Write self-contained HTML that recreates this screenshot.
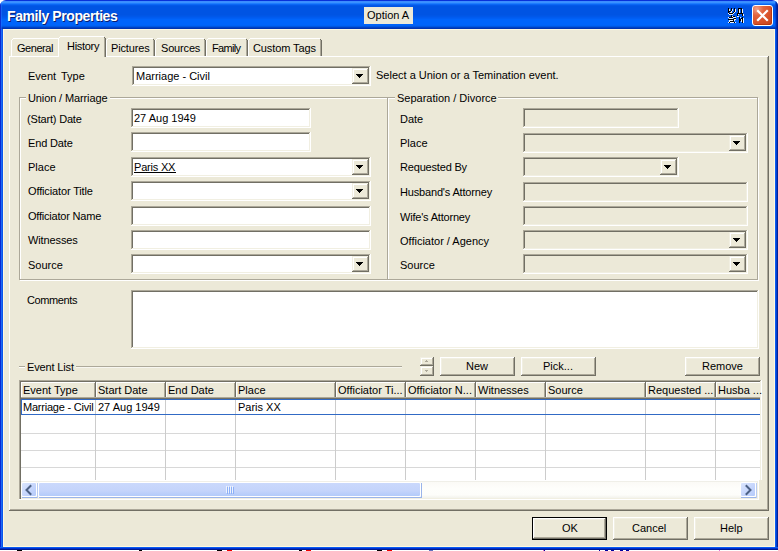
<!DOCTYPE html>
<html><head><meta charset="utf-8">
<style>
*{box-sizing:border-box}
html,body{margin:0;padding:0}
body{width:778px;height:551px;overflow:hidden;position:relative;background:#fff;font-family:"Liberation Sans",sans-serif;font-size:11px;color:#000}
.a{position:absolute}
.t{position:absolute;white-space:nowrap;line-height:20px;font-size:11px}
</style></head><body>

<div class="a" style="left:0px;top:29px;width:778px;height:521px;background:#0a50e8;"></div>
<div class="a" style="left:0px;top:29px;width:1px;height:521px;background:#0a28d0;"></div>
<div class="a" style="left:1px;top:29px;width:1px;height:518px;background:#1d6af5;"></div>
<div class="a" style="left:2px;top:29px;width:1px;height:518px;background:#0a56ec;"></div>
<div class="a" style="left:775px;top:29px;width:1px;height:518px;background:#0a5cf0;"></div>
<div class="a" style="left:776px;top:29px;width:1px;height:521px;background:#0040d0;"></div>
<div class="a" style="left:777px;top:29px;width:1px;height:521px;background:#00209a;"></div>
<div class="a" style="left:0px;top:547px;width:778px;height:1px;background:#0a5cf0;"></div>
<div class="a" style="left:0px;top:548px;width:778px;height:1px;background:#0030d0;"></div>
<div class="a" style="left:0px;top:549px;width:778px;height:1px;background:#001a90;"></div>
<div class="a" style="left:0;top:0;width:778px;height:29px;border-radius:6px 6px 0 0;overflow:hidden;background:linear-gradient(180deg,#0831d9 0px,#0831d9 1px,#3c8cfe 1px,#3c8cfe 2px,#3a91ff 2px,#3a91ff 3px,#1f7cfe 3px,#1f7cfe 4px,#0a66f4 4px,#0a66f4 5px,#0358e8 5px,#0358e8 6px,#0054e3 6px,#0054e3 7px,#0054e3 7px,#0054e3 8px,#0054e3 8px,#0054e3 9px,#0054e3 9px,#0054e3 10px,#0054e3 10px,#0054e3 11px,#0054e3 11px,#0054e3 12px,#0054e3 12px,#0054e3 13px,#0054e3 13px,#0054e3 14px,#0054e3 14px,#0054e3 15px,#0056e6 15px,#0056e6 16px,#0058ea 16px,#0058ea 17px,#005bf0 17px,#005bf0 18px,#005ff4 18px,#005ff4 19px,#0064fb 19px,#0064fb 20px,#0064fb 20px,#0064fb 21px,#0064fb 21px,#0064fb 22px,#0064fb 22px,#0064fb 23px,#0064fb 23px,#0064fb 24px,#0064fb 24px,#0064fb 25px,#0062f4 25px,#0062f4 26px,#0056e2 26px,#0056e2 27px,#0042c4 27px,#0042c4 28px,#0034b0 28px,#0034b0 29px)"><div class="a" style="left:0;top:0;width:1px;height:29px;background:#0a30d0"></div><div class="a" style="left:1px;top:0;width:1px;height:29px;background:rgba(40,110,255,.5)"></div><div class="a" style="left:775px;top:0;width:1px;height:29px;background:rgba(0,56,200,.6)"></div><div class="a" style="left:776px;top:0;width:1px;height:29px;background:#002cb0"></div><div class="a" style="left:777px;top:0;width:1px;height:29px;background:#001c90"></div></div>
<div class="a" style="left:3px;top:29px;width:772px;height:518px;background:#fff8e0;"></div>
<div class="a" style="left:4px;top:30px;width:770px;height:516px;background:#ece9d8;"></div>
<div class="t" style="left:8px;top:7px;font-size:14px;font-weight:bold;letter-spacing:-0.42px;color:#0a1e6e">Family Properties</div>
<div class="t" style="left:7px;top:6px;font-size:14px;font-weight:bold;letter-spacing:-0.42px;color:#fff">Family Properties</div>
<div class="a" style="left:364px;top:7px;width:49px;height:17px;background:#ece9d8;"></div>
<div class="t" style="left:367px;top:5px;color:#000">Option A</div>
<div class="a" style="left:752px;top:5px;width:21px;height:21px;border:1px solid #fff;border-radius:3px;background:radial-gradient(circle at 20% 15%,#f0a088 0,#e2643e 30%,#d9522a 60%,#c4441c 100%);box-shadow:inset -1px -1px 0 #b83810"></div>
<svg class="a" style="left:752px;top:5px" width="21" height="21"><path d="M6 6 L15 15 M15 6 L6 15" stroke="#fff" stroke-width="2.2" stroke-linecap="square"/></svg>
<svg class="a" style="left:726px;top:7px" width="20" height="17" shape-rendering="crispEdges"><rect x="3" y="2" width="1" height="1" fill="#eaf2ff"/><rect x="3" y="3" width="1" height="1" fill="#eaf2ff"/><rect x="6" y="2" width="1" height="1" fill="#eaf2ff"/><rect x="6" y="3" width="1" height="1" fill="#eaf2ff"/><rect x="9" y="2" width="1" height="1" fill="#eaf2ff"/><rect x="9" y="3" width="1" height="1" fill="#eaf2ff"/><rect x="9" y="4" width="1" height="1" fill="#eaf2ff"/><rect x="5" y="4" width="1" height="1" fill="#eaf2ff"/><rect x="4" y="5" width="1" height="1" fill="#eaf2ff"/><rect x="5" y="5" width="1" height="1" fill="#eaf2ff"/><rect x="2" y="6" width="1" height="1" fill="#eaf2ff"/><rect x="7" y="6" width="1" height="1" fill="#eaf2ff"/><rect x="8" y="5" width="1" height="1" fill="#eaf2ff"/><rect x="3" y="7" width="1" height="1" fill="#eaf2ff"/><rect x="4" y="7" width="1" height="1" fill="#eaf2ff"/><rect x="5" y="7" width="1" height="1" fill="#eaf2ff"/><rect x="6" y="7" width="1" height="1" fill="#eaf2ff"/><rect x="13" y="2" width="1" height="1" fill="#eaf2ff"/><rect x="13" y="3" width="1" height="1" fill="#eaf2ff"/><rect x="13" y="4" width="1" height="1" fill="#eaf2ff"/><rect x="13" y="5" width="1" height="1" fill="#eaf2ff"/><rect x="16" y="2" width="1" height="1" fill="#eaf2ff"/><rect x="16" y="3" width="1" height="1" fill="#eaf2ff"/><rect x="16" y="4" width="1" height="1" fill="#eaf2ff"/><rect x="16" y="5" width="1" height="1" fill="#eaf2ff"/><rect x="12" y="7" width="1" height="1" fill="#eaf2ff"/><rect x="17" y="7" width="1" height="1" fill="#eaf2ff"/><rect x="17" y="8" width="1" height="1" fill="#eaf2ff"/><rect x="12" y="9" width="1" height="1" fill="#eaf2ff"/><rect x="11" y="9" width="1" height="1" fill="#eaf2ff"/><rect x="6" y="9" width="1" height="1" fill="#eaf2ff"/><rect x="2" y="10" width="1" height="1" fill="#eaf2ff"/><rect x="7" y="10" width="1" height="1" fill="#eaf2ff"/><rect x="8" y="10" width="1" height="1" fill="#eaf2ff"/><rect x="9" y="10" width="1" height="1" fill="#eaf2ff"/><rect x="3" y="11" width="1" height="1" fill="#eaf2ff"/><rect x="4" y="11" width="1" height="1" fill="#eaf2ff"/><rect x="5" y="11" width="1" height="1" fill="#eaf2ff"/><rect x="6" y="11" width="1" height="1" fill="#eaf2ff"/><rect x="8" y="12" width="1" height="1" fill="#eaf2ff"/><rect x="9" y="12" width="1" height="1" fill="#eaf2ff"/><rect x="3" y="13" width="1" height="1" fill="#eaf2ff"/><rect x="4" y="13" width="1" height="1" fill="#eaf2ff"/><rect x="5" y="13" width="1" height="1" fill="#eaf2ff"/><rect x="6" y="13" width="1" height="1" fill="#eaf2ff"/><rect x="8" y="13" width="1" height="1" fill="#eaf2ff"/><rect x="3" y="14" width="1" height="1" fill="#eaf2ff"/><rect x="4" y="15" width="1" height="1" fill="#eaf2ff"/><rect x="5" y="15" width="1" height="1" fill="#eaf2ff"/><rect x="6" y="15" width="1" height="1" fill="#eaf2ff"/><rect x="7" y="15" width="1" height="1" fill="#eaf2ff"/><rect x="2" y="15" width="1" height="1" fill="#eaf2ff"/><rect x="9" y="15" width="1" height="1" fill="#eaf2ff"/><rect x="17" y="11" width="1" height="1" fill="#eaf2ff"/><rect x="17" y="12" width="1" height="1" fill="#eaf2ff"/><rect x="17" y="13" width="1" height="1" fill="#eaf2ff"/><rect x="17" y="14" width="1" height="1" fill="#eaf2ff"/><rect x="17" y="15" width="1" height="1" fill="#eaf2ff"/><rect x="14" y="10" width="1" height="1" fill="#eaf2ff"/><rect x="15" y="12" width="1" height="1" fill="#eaf2ff"/><rect x="15" y="13" width="1" height="1" fill="#eaf2ff"/><rect x="15" y="14" width="1" height="1" fill="#eaf2ff"/><rect x="2" y="1" width="1" height="1" fill="#000"/><rect x="2" y="2" width="1" height="1" fill="#000"/><rect x="2" y="3" width="1" height="1" fill="#000"/><rect x="2" y="4" width="1" height="1" fill="#000"/><rect x="2" y="5" width="1" height="1" fill="#000"/><rect x="5" y="1" width="1" height="1" fill="#000"/><rect x="5" y="2" width="1" height="1" fill="#000"/><rect x="5" y="3" width="1" height="1" fill="#000"/><rect x="3" y="4" width="1" height="1" fill="#000"/><rect x="4" y="4" width="1" height="1" fill="#000"/><rect x="8" y="1" width="1" height="1" fill="#000"/><rect x="8" y="2" width="1" height="1" fill="#000"/><rect x="8" y="3" width="1" height="1" fill="#000"/><rect x="8" y="4" width="1" height="1" fill="#000"/><rect x="7" y="5" width="1" height="1" fill="#000"/><rect x="3" y="6" width="1" height="1" fill="#000"/><rect x="4" y="6" width="1" height="1" fill="#000"/><rect x="5" y="6" width="1" height="1" fill="#000"/><rect x="6" y="6" width="1" height="1" fill="#000"/><rect x="12" y="1" width="1" height="1" fill="#000"/><rect x="13" y="1" width="1" height="1" fill="#000"/><rect x="14" y="1" width="1" height="1" fill="#000"/><rect x="15" y="1" width="1" height="1" fill="#000"/><rect x="12" y="2" width="1" height="1" fill="#000"/><rect x="12" y="3" width="1" height="1" fill="#000"/><rect x="12" y="4" width="1" height="1" fill="#000"/><rect x="12" y="5" width="1" height="1" fill="#000"/><rect x="15" y="2" width="1" height="1" fill="#000"/><rect x="15" y="3" width="1" height="1" fill="#000"/><rect x="15" y="4" width="1" height="1" fill="#000"/><rect x="15" y="5" width="1" height="1" fill="#000"/><rect x="11" y="6" width="1" height="1" fill="#000"/><rect x="12" y="6" width="1" height="1" fill="#000"/><rect x="13" y="6" width="1" height="1" fill="#000"/><rect x="14" y="6" width="1" height="1" fill="#000"/><rect x="15" y="6" width="1" height="1" fill="#000"/><rect x="16" y="6" width="1" height="1" fill="#000"/><rect x="11" y="7" width="1" height="1" fill="#000"/><rect x="11" y="8" width="1" height="1" fill="#000"/><rect x="16" y="7" width="1" height="1" fill="#000"/><rect x="16" y="8" width="1" height="1" fill="#000"/><rect x="5" y="8" width="1" height="1" fill="#000"/><rect x="5" y="9" width="1" height="1" fill="#000"/><rect x="7" y="9" width="1" height="1" fill="#000"/><rect x="8" y="9" width="1" height="1" fill="#000"/><rect x="3" y="10" width="1" height="1" fill="#000"/><rect x="4" y="10" width="1" height="1" fill="#000"/><rect x="5" y="10" width="1" height="1" fill="#000"/><rect x="6" y="10" width="1" height="1" fill="#000"/><rect x="8" y="11" width="1" height="1" fill="#000"/><rect x="9" y="11" width="1" height="1" fill="#000"/><rect x="2" y="12" width="1" height="1" fill="#000"/><rect x="3" y="12" width="1" height="1" fill="#000"/><rect x="4" y="12" width="1" height="1" fill="#000"/><rect x="5" y="12" width="1" height="1" fill="#000"/><rect x="6" y="12" width="1" height="1" fill="#000"/><rect x="7" y="12" width="1" height="1" fill="#000"/><rect x="7" y="13" width="1" height="1" fill="#000"/><rect x="4" y="14" width="1" height="1" fill="#000"/><rect x="5" y="14" width="1" height="1" fill="#000"/><rect x="6" y="14" width="1" height="1" fill="#000"/><rect x="7" y="14" width="1" height="1" fill="#000"/><rect x="3" y="15" width="1" height="1" fill="#000"/><rect x="8" y="15" width="1" height="1" fill="#000"/><rect x="13" y="10" width="1" height="1" fill="#000"/><rect x="13" y="11" width="1" height="1" fill="#000"/><rect x="13" y="12" width="1" height="1" fill="#000"/><rect x="13" y="13" width="1" height="1" fill="#000"/><rect x="13" y="14" width="1" height="1" fill="#000"/><rect x="13" y="15" width="1" height="1" fill="#000"/><rect x="16" y="10" width="1" height="1" fill="#000"/><rect x="16" y="11" width="1" height="1" fill="#000"/><rect x="16" y="12" width="1" height="1" fill="#000"/><rect x="16" y="13" width="1" height="1" fill="#000"/><rect x="16" y="14" width="1" height="1" fill="#000"/><rect x="16" y="15" width="1" height="1" fill="#000"/><rect x="15" y="11" width="1" height="1" fill="#000"/><rect x="14" y="12" width="1" height="1" fill="#000"/><rect x="14" y="13" width="1" height="1" fill="#000"/></svg>
<div class="a" style="left:9px;top:56px;width:760px;height:455px;background:#ece9d8;"></div>
<div class="a" style="left:9px;top:56px;width:760px;height:1px;background:#ffffff;"></div>
<div class="a" style="left:9px;top:56px;width:1px;height:455px;background:#ffffff;"></div>
<div class="a" style="left:767px;top:57px;width:1px;height:453px;background:#aca899;"></div>
<div class="a" style="left:10px;top:509px;width:758px;height:1px;background:#aca899;"></div>
<div class="a" style="left:768px;top:56px;width:1px;height:455px;background:#716f64;"></div>
<div class="a" style="left:9px;top:510px;width:760px;height:1px;background:#716f64;"></div>
<div class="a" style="left:11px;top:38px;width:49px;height:18px;background:#ece9d8;"></div>
<div class="a" style="left:13px;top:38px;width:45px;height:1px;background:#ffffff;"></div>
<div class="a" style="left:12px;top:39px;width:1px;height:1px;background:#ffffff;"></div>
<div class="a" style="left:11px;top:40px;width:1px;height:16px;background:#ffffff;"></div>
<div class="a" style="left:58px;top:39px;width:1px;height:1px;background:#716f64;"></div>
<div class="a" style="left:58px;top:40px;width:1px;height:16px;background:#aca899;"></div>
<div class="a" style="left:59px;top:40px;width:1px;height:16px;background:#716f64;"></div>
<div class="a" style="left:106px;top:38px;width:49px;height:18px;background:#ece9d8;"></div>
<div class="a" style="left:108px;top:38px;width:45px;height:1px;background:#ffffff;"></div>
<div class="a" style="left:107px;top:39px;width:1px;height:1px;background:#ffffff;"></div>
<div class="a" style="left:106px;top:40px;width:1px;height:16px;background:#ffffff;"></div>
<div class="a" style="left:153px;top:39px;width:1px;height:1px;background:#716f64;"></div>
<div class="a" style="left:153px;top:40px;width:1px;height:16px;background:#aca899;"></div>
<div class="a" style="left:154px;top:40px;width:1px;height:16px;background:#716f64;"></div>
<div class="a" style="left:155px;top:38px;width:51px;height:18px;background:#ece9d8;"></div>
<div class="a" style="left:157px;top:38px;width:47px;height:1px;background:#ffffff;"></div>
<div class="a" style="left:156px;top:39px;width:1px;height:1px;background:#ffffff;"></div>
<div class="a" style="left:155px;top:40px;width:1px;height:16px;background:#ffffff;"></div>
<div class="a" style="left:204px;top:39px;width:1px;height:1px;background:#716f64;"></div>
<div class="a" style="left:204px;top:40px;width:1px;height:16px;background:#aca899;"></div>
<div class="a" style="left:205px;top:40px;width:1px;height:16px;background:#716f64;"></div>
<div class="a" style="left:206px;top:38px;width:42px;height:18px;background:#ece9d8;"></div>
<div class="a" style="left:208px;top:38px;width:38px;height:1px;background:#ffffff;"></div>
<div class="a" style="left:207px;top:39px;width:1px;height:1px;background:#ffffff;"></div>
<div class="a" style="left:206px;top:40px;width:1px;height:16px;background:#ffffff;"></div>
<div class="a" style="left:246px;top:39px;width:1px;height:1px;background:#716f64;"></div>
<div class="a" style="left:246px;top:40px;width:1px;height:16px;background:#aca899;"></div>
<div class="a" style="left:247px;top:40px;width:1px;height:16px;background:#716f64;"></div>
<div class="a" style="left:248px;top:38px;width:74px;height:18px;background:#ece9d8;"></div>
<div class="a" style="left:250px;top:38px;width:70px;height:1px;background:#ffffff;"></div>
<div class="a" style="left:249px;top:39px;width:1px;height:1px;background:#ffffff;"></div>
<div class="a" style="left:248px;top:40px;width:1px;height:16px;background:#ffffff;"></div>
<div class="a" style="left:320px;top:39px;width:1px;height:1px;background:#716f64;"></div>
<div class="a" style="left:320px;top:40px;width:1px;height:16px;background:#aca899;"></div>
<div class="a" style="left:321px;top:40px;width:1px;height:16px;background:#716f64;"></div>
<div class="a" style="left:58px;top:36px;width:48px;height:21px;background:#ece9d8;"></div>
<div class="a" style="left:60px;top:36px;width:44px;height:1px;background:#ffffff;"></div>
<div class="a" style="left:59px;top:37px;width:1px;height:1px;background:#ffffff;"></div>
<div class="a" style="left:58px;top:38px;width:1px;height:19px;background:#ffffff;"></div>
<div class="a" style="left:104px;top:37px;width:1px;height:1px;background:#716f64;"></div>
<div class="a" style="left:104px;top:38px;width:1px;height:19px;background:#aca899;"></div>
<div class="a" style="left:105px;top:38px;width:1px;height:19px;background:#716f64;"></div>
<div class="a" style="left:59px;top:56px;width:45px;height:2px;background:#ece9d8;"></div>
<div class="t" style="left:17px;top:38px;letter-spacing:-0.45px">General</div>
<div class="t" style="left:67px;top:36px;letter-spacing:-0.3px">History</div>
<div class="t" style="left:111px;top:38px;letter-spacing:-0.15px">Pictures</div>
<div class="t" style="left:161px;top:38px;letter-spacing:-0.17px">Sources</div>
<div class="t" style="left:212px;top:38px;letter-spacing:-0.7px">Family</div>
<div class="t" style="left:253px;top:38px;letter-spacing:-0.1px">Custom Tags</div>
<div class="t" style="left:28px;top:66px;word-spacing:2px">Event Type</div>
<div class="a" style="left:132px;top:66px;width:239px;height:20px;background:#fff;"></div>
<div class="a" style="left:132px;top:66px;width:239px;height:1px;background:#aca899;"></div>
<div class="a" style="left:132px;top:66px;width:1px;height:20px;background:#aca899;"></div>
<div class="a" style="left:132px;top:85px;width:239px;height:1px;background:#ffffff;"></div>
<div class="a" style="left:370px;top:66px;width:1px;height:20px;background:#ffffff;"></div>
<div class="a" style="left:133px;top:67px;width:237px;height:1px;background:#716f64;"></div>
<div class="a" style="left:133px;top:67px;width:1px;height:18px;background:#716f64;"></div>
<div class="a" style="left:133px;top:84px;width:237px;height:1px;background:#f1efe2;"></div>
<div class="a" style="left:369px;top:67px;width:1px;height:18px;background:#f1efe2;"></div>
<div class="a" style="left:370px;top:66px;width:1px;height:1px;background:#ffffff;"></div>
<div class="a" style="left:352px;top:68px;width:17px;height:16px;background:#ece9d8;"></div>
<div class="a" style="left:352px;top:68px;width:17px;height:1px;background:#f1efe2;"></div>
<div class="a" style="left:352px;top:68px;width:1px;height:16px;background:#f1efe2;"></div>
<div class="a" style="left:352px;top:83px;width:17px;height:1px;background:#716f64;"></div>
<div class="a" style="left:368px;top:68px;width:1px;height:16px;background:#716f64;"></div>
<div class="a" style="left:353px;top:69px;width:15px;height:1px;background:#ffffff;"></div>
<div class="a" style="left:353px;top:69px;width:1px;height:14px;background:#ffffff;"></div>
<div class="a" style="left:353px;top:82px;width:15px;height:1px;background:#aca899;"></div>
<div class="a" style="left:367px;top:69px;width:1px;height:14px;background:#aca899;"></div>
<div class="a" style="left:356px;top:74px;width:7px;height:1px;background:#000;"></div>
<div class="a" style="left:357px;top:75px;width:5px;height:1px;background:#000;"></div>
<div class="a" style="left:358px;top:76px;width:3px;height:1px;background:#000;"></div>
<div class="a" style="left:359px;top:77px;width:1px;height:1px;background:#000;"></div>
<div class="t" style="left:136px;top:66px;">Marriage - Civil</div>
<div class="t" style="left:376px;top:65px;">Select a Union or a Temination event.</div>
<div class="a" style="left:20px;top:98px;width:369px;height:1px;background:#ffffff;"></div>
<div class="a" style="left:20px;top:98px;width:1px;height:183px;background:#ffffff;"></div>
<div class="a" style="left:20px;top:280px;width:369px;height:1px;background:#ffffff;"></div>
<div class="a" style="left:388px;top:98px;width:1px;height:183px;background:#ffffff;"></div>
<div class="a" style="left:19px;top:97px;width:369px;height:1px;background:#aca899;"></div>
<div class="a" style="left:19px;top:97px;width:1px;height:183px;background:#aca899;"></div>
<div class="a" style="left:19px;top:279px;width:369px;height:1px;background:#aca899;"></div>
<div class="a" style="left:387px;top:97px;width:1px;height:183px;background:#aca899;"></div>
<div class="a" style="left:388px;top:98px;width:371px;height:1px;background:#ffffff;"></div>
<div class="a" style="left:388px;top:98px;width:1px;height:183px;background:#ffffff;"></div>
<div class="a" style="left:388px;top:280px;width:371px;height:1px;background:#ffffff;"></div>
<div class="a" style="left:758px;top:98px;width:1px;height:183px;background:#ffffff;"></div>
<div class="a" style="left:387px;top:97px;width:371px;height:1px;background:#aca899;"></div>
<div class="a" style="left:387px;top:97px;width:1px;height:183px;background:#aca899;"></div>
<div class="a" style="left:387px;top:279px;width:371px;height:1px;background:#aca899;"></div>
<div class="a" style="left:757px;top:97px;width:1px;height:183px;background:#aca899;"></div>
<div class="a" style="left:26px;top:90px;width:84px;height:15px;background:#ece9d8;"></div>
<div class="a" style="left:395px;top:90px;width:103px;height:15px;background:#ece9d8;"></div>
<div class="t" style="left:28px;top:88px;letter-spacing:-0.12px">Union / Marriage</div>
<div class="t" style="left:397px;top:88px;">Separation / Divorce</div>
<div class="t" style="left:27px;top:109px;letter-spacing:-0.18px">(Start) Date</div>
<div class="a" style="left:131px;top:108px;width:180px;height:20px;background:#fff;"></div>
<div class="a" style="left:131px;top:108px;width:180px;height:1px;background:#aca899;"></div>
<div class="a" style="left:131px;top:108px;width:1px;height:20px;background:#aca899;"></div>
<div class="a" style="left:131px;top:127px;width:180px;height:1px;background:#ffffff;"></div>
<div class="a" style="left:310px;top:108px;width:1px;height:20px;background:#ffffff;"></div>
<div class="a" style="left:132px;top:109px;width:178px;height:1px;background:#716f64;"></div>
<div class="a" style="left:132px;top:109px;width:1px;height:18px;background:#716f64;"></div>
<div class="a" style="left:132px;top:126px;width:178px;height:1px;background:#f1efe2;"></div>
<div class="a" style="left:309px;top:109px;width:1px;height:18px;background:#f1efe2;"></div>
<div class="a" style="left:310px;top:108px;width:1px;height:1px;background:#ffffff;"></div>
<div class="t" style="left:134px;top:108px;">27 Aug 1949</div>
<div class="t" style="left:28px;top:133px;letter-spacing:-0.14px">End Date</div>
<div class="a" style="left:131px;top:132px;width:180px;height:20px;background:#fff;"></div>
<div class="a" style="left:131px;top:132px;width:180px;height:1px;background:#aca899;"></div>
<div class="a" style="left:131px;top:132px;width:1px;height:20px;background:#aca899;"></div>
<div class="a" style="left:131px;top:151px;width:180px;height:1px;background:#ffffff;"></div>
<div class="a" style="left:310px;top:132px;width:1px;height:20px;background:#ffffff;"></div>
<div class="a" style="left:132px;top:133px;width:178px;height:1px;background:#716f64;"></div>
<div class="a" style="left:132px;top:133px;width:1px;height:18px;background:#716f64;"></div>
<div class="a" style="left:132px;top:150px;width:178px;height:1px;background:#f1efe2;"></div>
<div class="a" style="left:309px;top:133px;width:1px;height:18px;background:#f1efe2;"></div>
<div class="a" style="left:310px;top:132px;width:1px;height:1px;background:#ffffff;"></div>
<div class="t" style="left:28px;top:157px;">Place</div>
<div class="a" style="left:131px;top:157px;width:240px;height:20px;background:#fff;"></div>
<div class="a" style="left:131px;top:157px;width:240px;height:1px;background:#aca899;"></div>
<div class="a" style="left:131px;top:157px;width:1px;height:20px;background:#aca899;"></div>
<div class="a" style="left:131px;top:176px;width:240px;height:1px;background:#ffffff;"></div>
<div class="a" style="left:370px;top:157px;width:1px;height:20px;background:#ffffff;"></div>
<div class="a" style="left:132px;top:158px;width:238px;height:1px;background:#716f64;"></div>
<div class="a" style="left:132px;top:158px;width:1px;height:18px;background:#716f64;"></div>
<div class="a" style="left:132px;top:175px;width:238px;height:1px;background:#f1efe2;"></div>
<div class="a" style="left:369px;top:158px;width:1px;height:18px;background:#f1efe2;"></div>
<div class="a" style="left:370px;top:157px;width:1px;height:1px;background:#ffffff;"></div>
<div class="a" style="left:352px;top:159px;width:17px;height:16px;background:#ece9d8;"></div>
<div class="a" style="left:352px;top:159px;width:17px;height:1px;background:#f1efe2;"></div>
<div class="a" style="left:352px;top:159px;width:1px;height:16px;background:#f1efe2;"></div>
<div class="a" style="left:352px;top:174px;width:17px;height:1px;background:#716f64;"></div>
<div class="a" style="left:368px;top:159px;width:1px;height:16px;background:#716f64;"></div>
<div class="a" style="left:353px;top:160px;width:15px;height:1px;background:#ffffff;"></div>
<div class="a" style="left:353px;top:160px;width:1px;height:14px;background:#ffffff;"></div>
<div class="a" style="left:353px;top:173px;width:15px;height:1px;background:#aca899;"></div>
<div class="a" style="left:367px;top:160px;width:1px;height:14px;background:#aca899;"></div>
<div class="a" style="left:356px;top:165px;width:7px;height:1px;background:#000;"></div>
<div class="a" style="left:357px;top:166px;width:5px;height:1px;background:#000;"></div>
<div class="a" style="left:358px;top:167px;width:3px;height:1px;background:#000;"></div>
<div class="a" style="left:359px;top:168px;width:1px;height:1px;background:#000;"></div>
<div class="t" style="left:134px;top:157px;letter-spacing:-0.2px">Paris XX</div>
<div class="a" style="left:134px;top:172px;width:42px;height:1px;background:#000;"></div>
<div class="t" style="left:28px;top:181px;letter-spacing:-0.14px">Officiator Title</div>
<div class="a" style="left:131px;top:181px;width:240px;height:20px;background:#fff;"></div>
<div class="a" style="left:131px;top:181px;width:240px;height:1px;background:#aca899;"></div>
<div class="a" style="left:131px;top:181px;width:1px;height:20px;background:#aca899;"></div>
<div class="a" style="left:131px;top:200px;width:240px;height:1px;background:#ffffff;"></div>
<div class="a" style="left:370px;top:181px;width:1px;height:20px;background:#ffffff;"></div>
<div class="a" style="left:132px;top:182px;width:238px;height:1px;background:#716f64;"></div>
<div class="a" style="left:132px;top:182px;width:1px;height:18px;background:#716f64;"></div>
<div class="a" style="left:132px;top:199px;width:238px;height:1px;background:#f1efe2;"></div>
<div class="a" style="left:369px;top:182px;width:1px;height:18px;background:#f1efe2;"></div>
<div class="a" style="left:370px;top:181px;width:1px;height:1px;background:#ffffff;"></div>
<div class="a" style="left:352px;top:183px;width:17px;height:16px;background:#ece9d8;"></div>
<div class="a" style="left:352px;top:183px;width:17px;height:1px;background:#f1efe2;"></div>
<div class="a" style="left:352px;top:183px;width:1px;height:16px;background:#f1efe2;"></div>
<div class="a" style="left:352px;top:198px;width:17px;height:1px;background:#716f64;"></div>
<div class="a" style="left:368px;top:183px;width:1px;height:16px;background:#716f64;"></div>
<div class="a" style="left:353px;top:184px;width:15px;height:1px;background:#ffffff;"></div>
<div class="a" style="left:353px;top:184px;width:1px;height:14px;background:#ffffff;"></div>
<div class="a" style="left:353px;top:197px;width:15px;height:1px;background:#aca899;"></div>
<div class="a" style="left:367px;top:184px;width:1px;height:14px;background:#aca899;"></div>
<div class="a" style="left:356px;top:189px;width:7px;height:1px;background:#000;"></div>
<div class="a" style="left:357px;top:190px;width:5px;height:1px;background:#000;"></div>
<div class="a" style="left:358px;top:191px;width:3px;height:1px;background:#000;"></div>
<div class="a" style="left:359px;top:192px;width:1px;height:1px;background:#000;"></div>
<div class="t" style="left:28px;top:206px;letter-spacing:-0.21px">Officiator Name</div>
<div class="a" style="left:131px;top:206px;width:240px;height:20px;background:#fff;"></div>
<div class="a" style="left:131px;top:206px;width:240px;height:1px;background:#aca899;"></div>
<div class="a" style="left:131px;top:206px;width:1px;height:20px;background:#aca899;"></div>
<div class="a" style="left:131px;top:225px;width:240px;height:1px;background:#ffffff;"></div>
<div class="a" style="left:370px;top:206px;width:1px;height:20px;background:#ffffff;"></div>
<div class="a" style="left:132px;top:207px;width:238px;height:1px;background:#716f64;"></div>
<div class="a" style="left:132px;top:207px;width:1px;height:18px;background:#716f64;"></div>
<div class="a" style="left:132px;top:224px;width:238px;height:1px;background:#f1efe2;"></div>
<div class="a" style="left:369px;top:207px;width:1px;height:18px;background:#f1efe2;"></div>
<div class="a" style="left:370px;top:206px;width:1px;height:1px;background:#ffffff;"></div>
<div class="t" style="left:28px;top:230px;letter-spacing:-0.12px">Witnesses</div>
<div class="a" style="left:131px;top:230px;width:240px;height:20px;background:#fff;"></div>
<div class="a" style="left:131px;top:230px;width:240px;height:1px;background:#aca899;"></div>
<div class="a" style="left:131px;top:230px;width:1px;height:20px;background:#aca899;"></div>
<div class="a" style="left:131px;top:249px;width:240px;height:1px;background:#ffffff;"></div>
<div class="a" style="left:370px;top:230px;width:1px;height:20px;background:#ffffff;"></div>
<div class="a" style="left:132px;top:231px;width:238px;height:1px;background:#716f64;"></div>
<div class="a" style="left:132px;top:231px;width:1px;height:18px;background:#716f64;"></div>
<div class="a" style="left:132px;top:248px;width:238px;height:1px;background:#f1efe2;"></div>
<div class="a" style="left:369px;top:231px;width:1px;height:18px;background:#f1efe2;"></div>
<div class="a" style="left:370px;top:230px;width:1px;height:1px;background:#ffffff;"></div>
<div class="t" style="left:28px;top:255px;">Source</div>
<div class="a" style="left:131px;top:254px;width:240px;height:20px;background:#fff;"></div>
<div class="a" style="left:131px;top:254px;width:240px;height:1px;background:#aca899;"></div>
<div class="a" style="left:131px;top:254px;width:1px;height:20px;background:#aca899;"></div>
<div class="a" style="left:131px;top:273px;width:240px;height:1px;background:#ffffff;"></div>
<div class="a" style="left:370px;top:254px;width:1px;height:20px;background:#ffffff;"></div>
<div class="a" style="left:132px;top:255px;width:238px;height:1px;background:#716f64;"></div>
<div class="a" style="left:132px;top:255px;width:1px;height:18px;background:#716f64;"></div>
<div class="a" style="left:132px;top:272px;width:238px;height:1px;background:#f1efe2;"></div>
<div class="a" style="left:369px;top:255px;width:1px;height:18px;background:#f1efe2;"></div>
<div class="a" style="left:370px;top:254px;width:1px;height:1px;background:#ffffff;"></div>
<div class="a" style="left:352px;top:256px;width:17px;height:16px;background:#ece9d8;"></div>
<div class="a" style="left:352px;top:256px;width:17px;height:1px;background:#f1efe2;"></div>
<div class="a" style="left:352px;top:256px;width:1px;height:16px;background:#f1efe2;"></div>
<div class="a" style="left:352px;top:271px;width:17px;height:1px;background:#716f64;"></div>
<div class="a" style="left:368px;top:256px;width:1px;height:16px;background:#716f64;"></div>
<div class="a" style="left:353px;top:257px;width:15px;height:1px;background:#ffffff;"></div>
<div class="a" style="left:353px;top:257px;width:1px;height:14px;background:#ffffff;"></div>
<div class="a" style="left:353px;top:270px;width:15px;height:1px;background:#aca899;"></div>
<div class="a" style="left:367px;top:257px;width:1px;height:14px;background:#aca899;"></div>
<div class="a" style="left:356px;top:262px;width:7px;height:1px;background:#000;"></div>
<div class="a" style="left:357px;top:263px;width:5px;height:1px;background:#000;"></div>
<div class="a" style="left:358px;top:264px;width:3px;height:1px;background:#000;"></div>
<div class="a" style="left:359px;top:265px;width:1px;height:1px;background:#000;"></div>
<div class="t" style="left:400px;top:109px;">Date</div>
<div class="a" style="left:523px;top:108px;width:156px;height:20px;background:#ece9d8;"></div>
<div class="a" style="left:523px;top:108px;width:156px;height:1px;background:#aca899;"></div>
<div class="a" style="left:523px;top:108px;width:1px;height:20px;background:#aca899;"></div>
<div class="a" style="left:523px;top:127px;width:156px;height:1px;background:#ffffff;"></div>
<div class="a" style="left:678px;top:108px;width:1px;height:20px;background:#ffffff;"></div>
<div class="a" style="left:524px;top:109px;width:154px;height:1px;background:#716f64;"></div>
<div class="a" style="left:524px;top:109px;width:1px;height:18px;background:#716f64;"></div>
<div class="a" style="left:524px;top:126px;width:154px;height:1px;background:#f1efe2;"></div>
<div class="a" style="left:677px;top:109px;width:1px;height:18px;background:#f1efe2;"></div>
<div class="a" style="left:678px;top:108px;width:1px;height:1px;background:#ffffff;"></div>
<div class="t" style="left:400px;top:133px;">Place</div>
<div class="a" style="left:523px;top:133px;width:225px;height:20px;background:#ece9d8;"></div>
<div class="a" style="left:523px;top:133px;width:225px;height:1px;background:#aca899;"></div>
<div class="a" style="left:523px;top:133px;width:1px;height:20px;background:#aca899;"></div>
<div class="a" style="left:523px;top:152px;width:225px;height:1px;background:#ffffff;"></div>
<div class="a" style="left:747px;top:133px;width:1px;height:20px;background:#ffffff;"></div>
<div class="a" style="left:524px;top:134px;width:223px;height:1px;background:#716f64;"></div>
<div class="a" style="left:524px;top:134px;width:1px;height:18px;background:#716f64;"></div>
<div class="a" style="left:524px;top:151px;width:223px;height:1px;background:#f1efe2;"></div>
<div class="a" style="left:746px;top:134px;width:1px;height:18px;background:#f1efe2;"></div>
<div class="a" style="left:747px;top:133px;width:1px;height:1px;background:#ffffff;"></div>
<div class="a" style="left:729px;top:135px;width:17px;height:16px;background:#ece9d8;"></div>
<div class="a" style="left:729px;top:135px;width:17px;height:1px;background:#f1efe2;"></div>
<div class="a" style="left:729px;top:135px;width:1px;height:16px;background:#f1efe2;"></div>
<div class="a" style="left:729px;top:150px;width:17px;height:1px;background:#716f64;"></div>
<div class="a" style="left:745px;top:135px;width:1px;height:16px;background:#716f64;"></div>
<div class="a" style="left:730px;top:136px;width:15px;height:1px;background:#ffffff;"></div>
<div class="a" style="left:730px;top:136px;width:1px;height:14px;background:#ffffff;"></div>
<div class="a" style="left:730px;top:149px;width:15px;height:1px;background:#aca899;"></div>
<div class="a" style="left:744px;top:136px;width:1px;height:14px;background:#aca899;"></div>
<div class="a" style="left:733px;top:141px;width:7px;height:1px;background:#000;"></div>
<div class="a" style="left:734px;top:142px;width:5px;height:1px;background:#000;"></div>
<div class="a" style="left:735px;top:143px;width:3px;height:1px;background:#000;"></div>
<div class="a" style="left:736px;top:144px;width:1px;height:1px;background:#000;"></div>
<div class="t" style="left:400px;top:157px;letter-spacing:-0.18px">Requested By</div>
<div class="a" style="left:523px;top:157px;width:156px;height:20px;background:#ece9d8;"></div>
<div class="a" style="left:523px;top:157px;width:156px;height:1px;background:#aca899;"></div>
<div class="a" style="left:523px;top:157px;width:1px;height:20px;background:#aca899;"></div>
<div class="a" style="left:523px;top:176px;width:156px;height:1px;background:#ffffff;"></div>
<div class="a" style="left:678px;top:157px;width:1px;height:20px;background:#ffffff;"></div>
<div class="a" style="left:524px;top:158px;width:154px;height:1px;background:#716f64;"></div>
<div class="a" style="left:524px;top:158px;width:1px;height:18px;background:#716f64;"></div>
<div class="a" style="left:524px;top:175px;width:154px;height:1px;background:#f1efe2;"></div>
<div class="a" style="left:677px;top:158px;width:1px;height:18px;background:#f1efe2;"></div>
<div class="a" style="left:678px;top:157px;width:1px;height:1px;background:#ffffff;"></div>
<div class="a" style="left:660px;top:159px;width:17px;height:16px;background:#ece9d8;"></div>
<div class="a" style="left:660px;top:159px;width:17px;height:1px;background:#f1efe2;"></div>
<div class="a" style="left:660px;top:159px;width:1px;height:16px;background:#f1efe2;"></div>
<div class="a" style="left:660px;top:174px;width:17px;height:1px;background:#716f64;"></div>
<div class="a" style="left:676px;top:159px;width:1px;height:16px;background:#716f64;"></div>
<div class="a" style="left:661px;top:160px;width:15px;height:1px;background:#ffffff;"></div>
<div class="a" style="left:661px;top:160px;width:1px;height:14px;background:#ffffff;"></div>
<div class="a" style="left:661px;top:173px;width:15px;height:1px;background:#aca899;"></div>
<div class="a" style="left:675px;top:160px;width:1px;height:14px;background:#aca899;"></div>
<div class="a" style="left:664px;top:165px;width:7px;height:1px;background:#000;"></div>
<div class="a" style="left:665px;top:166px;width:5px;height:1px;background:#000;"></div>
<div class="a" style="left:666px;top:167px;width:3px;height:1px;background:#000;"></div>
<div class="a" style="left:667px;top:168px;width:1px;height:1px;background:#000;"></div>
<div class="t" style="left:400px;top:182px;letter-spacing:-0.17px">Husband's Attorney</div>
<div class="a" style="left:523px;top:182px;width:225px;height:20px;background:#ece9d8;"></div>
<div class="a" style="left:523px;top:182px;width:225px;height:1px;background:#aca899;"></div>
<div class="a" style="left:523px;top:182px;width:1px;height:20px;background:#aca899;"></div>
<div class="a" style="left:523px;top:201px;width:225px;height:1px;background:#ffffff;"></div>
<div class="a" style="left:747px;top:182px;width:1px;height:20px;background:#ffffff;"></div>
<div class="a" style="left:524px;top:183px;width:223px;height:1px;background:#716f64;"></div>
<div class="a" style="left:524px;top:183px;width:1px;height:18px;background:#716f64;"></div>
<div class="a" style="left:524px;top:200px;width:223px;height:1px;background:#f1efe2;"></div>
<div class="a" style="left:746px;top:183px;width:1px;height:18px;background:#f1efe2;"></div>
<div class="a" style="left:747px;top:182px;width:1px;height:1px;background:#ffffff;"></div>
<div class="t" style="left:400px;top:207px;letter-spacing:-0.2px">Wife's Attorney</div>
<div class="a" style="left:523px;top:206px;width:225px;height:20px;background:#ece9d8;"></div>
<div class="a" style="left:523px;top:206px;width:225px;height:1px;background:#aca899;"></div>
<div class="a" style="left:523px;top:206px;width:1px;height:20px;background:#aca899;"></div>
<div class="a" style="left:523px;top:225px;width:225px;height:1px;background:#ffffff;"></div>
<div class="a" style="left:747px;top:206px;width:1px;height:20px;background:#ffffff;"></div>
<div class="a" style="left:524px;top:207px;width:223px;height:1px;background:#716f64;"></div>
<div class="a" style="left:524px;top:207px;width:1px;height:18px;background:#716f64;"></div>
<div class="a" style="left:524px;top:224px;width:223px;height:1px;background:#f1efe2;"></div>
<div class="a" style="left:746px;top:207px;width:1px;height:18px;background:#f1efe2;"></div>
<div class="a" style="left:747px;top:206px;width:1px;height:1px;background:#ffffff;"></div>
<div class="t" style="left:400px;top:231px;">Officiator / Agency</div>
<div class="a" style="left:523px;top:230px;width:225px;height:20px;background:#ece9d8;"></div>
<div class="a" style="left:523px;top:230px;width:225px;height:1px;background:#aca899;"></div>
<div class="a" style="left:523px;top:230px;width:1px;height:20px;background:#aca899;"></div>
<div class="a" style="left:523px;top:249px;width:225px;height:1px;background:#ffffff;"></div>
<div class="a" style="left:747px;top:230px;width:1px;height:20px;background:#ffffff;"></div>
<div class="a" style="left:524px;top:231px;width:223px;height:1px;background:#716f64;"></div>
<div class="a" style="left:524px;top:231px;width:1px;height:18px;background:#716f64;"></div>
<div class="a" style="left:524px;top:248px;width:223px;height:1px;background:#f1efe2;"></div>
<div class="a" style="left:746px;top:231px;width:1px;height:18px;background:#f1efe2;"></div>
<div class="a" style="left:747px;top:230px;width:1px;height:1px;background:#ffffff;"></div>
<div class="a" style="left:729px;top:232px;width:17px;height:16px;background:#ece9d8;"></div>
<div class="a" style="left:729px;top:232px;width:17px;height:1px;background:#f1efe2;"></div>
<div class="a" style="left:729px;top:232px;width:1px;height:16px;background:#f1efe2;"></div>
<div class="a" style="left:729px;top:247px;width:17px;height:1px;background:#716f64;"></div>
<div class="a" style="left:745px;top:232px;width:1px;height:16px;background:#716f64;"></div>
<div class="a" style="left:730px;top:233px;width:15px;height:1px;background:#ffffff;"></div>
<div class="a" style="left:730px;top:233px;width:1px;height:14px;background:#ffffff;"></div>
<div class="a" style="left:730px;top:246px;width:15px;height:1px;background:#aca899;"></div>
<div class="a" style="left:744px;top:233px;width:1px;height:14px;background:#aca899;"></div>
<div class="a" style="left:733px;top:238px;width:7px;height:1px;background:#000;"></div>
<div class="a" style="left:734px;top:239px;width:5px;height:1px;background:#000;"></div>
<div class="a" style="left:735px;top:240px;width:3px;height:1px;background:#000;"></div>
<div class="a" style="left:736px;top:241px;width:1px;height:1px;background:#000;"></div>
<div class="t" style="left:400px;top:255px;">Source</div>
<div class="a" style="left:523px;top:254px;width:225px;height:20px;background:#ece9d8;"></div>
<div class="a" style="left:523px;top:254px;width:225px;height:1px;background:#aca899;"></div>
<div class="a" style="left:523px;top:254px;width:1px;height:20px;background:#aca899;"></div>
<div class="a" style="left:523px;top:273px;width:225px;height:1px;background:#ffffff;"></div>
<div class="a" style="left:747px;top:254px;width:1px;height:20px;background:#ffffff;"></div>
<div class="a" style="left:524px;top:255px;width:223px;height:1px;background:#716f64;"></div>
<div class="a" style="left:524px;top:255px;width:1px;height:18px;background:#716f64;"></div>
<div class="a" style="left:524px;top:272px;width:223px;height:1px;background:#f1efe2;"></div>
<div class="a" style="left:746px;top:255px;width:1px;height:18px;background:#f1efe2;"></div>
<div class="a" style="left:747px;top:254px;width:1px;height:1px;background:#ffffff;"></div>
<div class="a" style="left:729px;top:256px;width:17px;height:16px;background:#ece9d8;"></div>
<div class="a" style="left:729px;top:256px;width:17px;height:1px;background:#f1efe2;"></div>
<div class="a" style="left:729px;top:256px;width:1px;height:16px;background:#f1efe2;"></div>
<div class="a" style="left:729px;top:271px;width:17px;height:1px;background:#716f64;"></div>
<div class="a" style="left:745px;top:256px;width:1px;height:16px;background:#716f64;"></div>
<div class="a" style="left:730px;top:257px;width:15px;height:1px;background:#ffffff;"></div>
<div class="a" style="left:730px;top:257px;width:1px;height:14px;background:#ffffff;"></div>
<div class="a" style="left:730px;top:270px;width:15px;height:1px;background:#aca899;"></div>
<div class="a" style="left:744px;top:257px;width:1px;height:14px;background:#aca899;"></div>
<div class="a" style="left:733px;top:262px;width:7px;height:1px;background:#000;"></div>
<div class="a" style="left:734px;top:263px;width:5px;height:1px;background:#000;"></div>
<div class="a" style="left:735px;top:264px;width:3px;height:1px;background:#000;"></div>
<div class="a" style="left:736px;top:265px;width:1px;height:1px;background:#000;"></div>
<div class="t" style="left:27px;top:290px;letter-spacing:-0.4px">Comments</div>
<div class="a" style="left:131px;top:290px;width:628px;height:59px;background:#fff;"></div>
<div class="a" style="left:131px;top:290px;width:628px;height:1px;background:#aca899;"></div>
<div class="a" style="left:131px;top:290px;width:1px;height:59px;background:#aca899;"></div>
<div class="a" style="left:131px;top:348px;width:628px;height:1px;background:#ffffff;"></div>
<div class="a" style="left:758px;top:290px;width:1px;height:59px;background:#ffffff;"></div>
<div class="a" style="left:132px;top:291px;width:626px;height:1px;background:#716f64;"></div>
<div class="a" style="left:132px;top:291px;width:1px;height:57px;background:#716f64;"></div>
<div class="a" style="left:132px;top:347px;width:626px;height:1px;background:#f1efe2;"></div>
<div class="a" style="left:757px;top:291px;width:1px;height:57px;background:#f1efe2;"></div>
<div class="a" style="left:758px;top:290px;width:1px;height:1px;background:#ffffff;"></div>
<div class="a" style="left:19px;top:366px;width:6px;height:1px;background:#aca899;"></div>
<div class="a" style="left:19px;top:367px;width:6px;height:1px;background:#ffffff;"></div>
<div class="t" style="left:27px;top:357px;letter-spacing:-0.15px">Event List</div>
<div class="a" style="left:76px;top:366px;width:326px;height:1px;background:#aca899;"></div>
<div class="a" style="left:76px;top:367px;width:326px;height:1px;background:#f7f6f0;"></div>
<div class="a" style="left:420px;top:357px;width:14px;height:9px;background:#ece9d8;"></div>
<div class="a" style="left:420px;top:357px;width:14px;height:1px;background:#f1efe2;"></div>
<div class="a" style="left:420px;top:357px;width:1px;height:9px;background:#f1efe2;"></div>
<div class="a" style="left:420px;top:365px;width:14px;height:1px;background:#716f64;"></div>
<div class="a" style="left:433px;top:357px;width:1px;height:9px;background:#716f64;"></div>
<div class="a" style="left:421px;top:358px;width:12px;height:1px;background:#ffffff;"></div>
<div class="a" style="left:421px;top:358px;width:1px;height:7px;background:#ffffff;"></div>
<div class="a" style="left:421px;top:364px;width:12px;height:1px;background:#aca899;"></div>
<div class="a" style="left:432px;top:358px;width:1px;height:7px;background:#aca899;"></div>
<div class="a" style="left:420px;top:366px;width:14px;height:10px;background:#ece9d8;"></div>
<div class="a" style="left:420px;top:366px;width:14px;height:1px;background:#f1efe2;"></div>
<div class="a" style="left:420px;top:366px;width:1px;height:10px;background:#f1efe2;"></div>
<div class="a" style="left:420px;top:375px;width:14px;height:1px;background:#716f64;"></div>
<div class="a" style="left:433px;top:366px;width:1px;height:10px;background:#716f64;"></div>
<div class="a" style="left:421px;top:367px;width:12px;height:1px;background:#ffffff;"></div>
<div class="a" style="left:421px;top:367px;width:1px;height:8px;background:#ffffff;"></div>
<div class="a" style="left:421px;top:374px;width:12px;height:1px;background:#aca899;"></div>
<div class="a" style="left:432px;top:367px;width:1px;height:8px;background:#aca899;"></div>
<div class="a" style="left:426px;top:360px;width:1px;height:1px;background:#aca899;"></div>
<div class="a" style="left:425px;top:361px;width:3px;height:1px;background:#aca899;"></div>
<div class="a" style="left:425px;top:370px;width:3px;height:1px;background:#aca899;"></div>
<div class="a" style="left:426px;top:371px;width:1px;height:1px;background:#aca899;"></div>
<div class="a" style="left:440px;top:357px;width:75px;height:19px;background:#ece9d8;"></div>
<div class="a" style="left:440px;top:357px;width:75px;height:1px;background:#ffffff;"></div>
<div class="a" style="left:440px;top:357px;width:1px;height:19px;background:#ffffff;"></div>
<div class="a" style="left:440px;top:375px;width:75px;height:1px;background:#716f64;"></div>
<div class="a" style="left:514px;top:357px;width:1px;height:19px;background:#716f64;"></div>
<div class="a" style="left:441px;top:358px;width:73px;height:1px;background:#f1efe2;"></div>
<div class="a" style="left:441px;top:358px;width:1px;height:17px;background:#f1efe2;"></div>
<div class="a" style="left:441px;top:374px;width:73px;height:1px;background:#aca899;"></div>
<div class="a" style="left:513px;top:358px;width:1px;height:17px;background:#aca899;"></div>
<div class="t" style="left:466px;top:356px;">New</div>
<div class="a" style="left:521px;top:357px;width:75px;height:19px;background:#ece9d8;"></div>
<div class="a" style="left:521px;top:357px;width:75px;height:1px;background:#ffffff;"></div>
<div class="a" style="left:521px;top:357px;width:1px;height:19px;background:#ffffff;"></div>
<div class="a" style="left:521px;top:375px;width:75px;height:1px;background:#716f64;"></div>
<div class="a" style="left:595px;top:357px;width:1px;height:19px;background:#716f64;"></div>
<div class="a" style="left:522px;top:358px;width:73px;height:1px;background:#f1efe2;"></div>
<div class="a" style="left:522px;top:358px;width:1px;height:17px;background:#f1efe2;"></div>
<div class="a" style="left:522px;top:374px;width:73px;height:1px;background:#aca899;"></div>
<div class="a" style="left:594px;top:358px;width:1px;height:17px;background:#aca899;"></div>
<div class="t" style="left:543px;top:356px;">Pick...</div>
<div class="a" style="left:685px;top:357px;width:75px;height:19px;background:#ece9d8;"></div>
<div class="a" style="left:685px;top:357px;width:75px;height:1px;background:#ffffff;"></div>
<div class="a" style="left:685px;top:357px;width:1px;height:19px;background:#ffffff;"></div>
<div class="a" style="left:685px;top:375px;width:75px;height:1px;background:#716f64;"></div>
<div class="a" style="left:759px;top:357px;width:1px;height:19px;background:#716f64;"></div>
<div class="a" style="left:686px;top:358px;width:73px;height:1px;background:#f1efe2;"></div>
<div class="a" style="left:686px;top:358px;width:1px;height:17px;background:#f1efe2;"></div>
<div class="a" style="left:686px;top:374px;width:73px;height:1px;background:#aca899;"></div>
<div class="a" style="left:758px;top:358px;width:1px;height:17px;background:#aca899;"></div>
<div class="t" style="left:702px;top:356px;">Remove</div>
<div class="a" style="left:19px;top:380px;width:743px;height:120px;background:#fff;"></div>
<div class="a" style="left:19px;top:380px;width:743px;height:1px;background:#aca899;"></div>
<div class="a" style="left:19px;top:380px;width:1px;height:120px;background:#aca899;"></div>
<div class="a" style="left:20px;top:381px;width:741px;height:1px;background:#716f64;"></div>
<div class="a" style="left:20px;top:381px;width:1px;height:118px;background:#716f64;"></div>
<div class="a" style="left:19px;top:499px;width:743px;height:1px;background:#ffffff;"></div>
<div class="a" style="left:761px;top:380px;width:1px;height:120px;background:#ffffff;"></div>
<div class="a" style="left:21px;top:498px;width:740px;height:1px;background:#f1efe2;"></div>
<div class="a" style="left:760px;top:381px;width:1px;height:118px;background:#f1efe2;"></div>
<div class="a" style="left:21px;top:382px;width:739px;height:17px;background:#ece9d8;"></div>
<div class="a" style="left:21px;top:382px;width:75px;height:1px;background:#ffffff;"></div>
<div class="a" style="left:21px;top:382px;width:1px;height:17px;background:#ffffff;"></div>
<div class="a" style="left:94px;top:383px;width:1px;height:15px;background:#aca899;"></div>
<div class="a" style="left:95px;top:382px;width:1px;height:17px;background:#716f64;"></div>
<div class="a" style="left:21px;top:397px;width:75px;height:1px;background:#aca899;"></div>
<div class="a" style="left:21px;top:398px;width:75px;height:1px;background:#716f64;"></div>
<div class="t" style="left:23px;top:380px;">Event Type</div>
<div class="a" style="left:96px;top:382px;width:70px;height:1px;background:#ffffff;"></div>
<div class="a" style="left:96px;top:382px;width:1px;height:17px;background:#ffffff;"></div>
<div class="a" style="left:164px;top:383px;width:1px;height:15px;background:#aca899;"></div>
<div class="a" style="left:165px;top:382px;width:1px;height:17px;background:#716f64;"></div>
<div class="a" style="left:96px;top:397px;width:70px;height:1px;background:#aca899;"></div>
<div class="a" style="left:96px;top:398px;width:70px;height:1px;background:#716f64;"></div>
<div class="t" style="left:98px;top:380px;">Start Date</div>
<div class="a" style="left:166px;top:382px;width:70px;height:1px;background:#ffffff;"></div>
<div class="a" style="left:166px;top:382px;width:1px;height:17px;background:#ffffff;"></div>
<div class="a" style="left:234px;top:383px;width:1px;height:15px;background:#aca899;"></div>
<div class="a" style="left:235px;top:382px;width:1px;height:17px;background:#716f64;"></div>
<div class="a" style="left:166px;top:397px;width:70px;height:1px;background:#aca899;"></div>
<div class="a" style="left:166px;top:398px;width:70px;height:1px;background:#716f64;"></div>
<div class="t" style="left:168px;top:380px;">End Date</div>
<div class="a" style="left:236px;top:382px;width:100px;height:1px;background:#ffffff;"></div>
<div class="a" style="left:236px;top:382px;width:1px;height:17px;background:#ffffff;"></div>
<div class="a" style="left:334px;top:383px;width:1px;height:15px;background:#aca899;"></div>
<div class="a" style="left:335px;top:382px;width:1px;height:17px;background:#716f64;"></div>
<div class="a" style="left:236px;top:397px;width:100px;height:1px;background:#aca899;"></div>
<div class="a" style="left:236px;top:398px;width:100px;height:1px;background:#716f64;"></div>
<div class="t" style="left:238px;top:380px;">Place</div>
<div class="a" style="left:336px;top:382px;width:70px;height:1px;background:#ffffff;"></div>
<div class="a" style="left:336px;top:382px;width:1px;height:17px;background:#ffffff;"></div>
<div class="a" style="left:404px;top:383px;width:1px;height:15px;background:#aca899;"></div>
<div class="a" style="left:405px;top:382px;width:1px;height:17px;background:#716f64;"></div>
<div class="a" style="left:336px;top:397px;width:70px;height:1px;background:#aca899;"></div>
<div class="a" style="left:336px;top:398px;width:70px;height:1px;background:#716f64;"></div>
<div class="t" style="left:338px;top:380px;">Officiator Ti...</div>
<div class="a" style="left:406px;top:382px;width:70px;height:1px;background:#ffffff;"></div>
<div class="a" style="left:406px;top:382px;width:1px;height:17px;background:#ffffff;"></div>
<div class="a" style="left:474px;top:383px;width:1px;height:15px;background:#aca899;"></div>
<div class="a" style="left:475px;top:382px;width:1px;height:17px;background:#716f64;"></div>
<div class="a" style="left:406px;top:397px;width:70px;height:1px;background:#aca899;"></div>
<div class="a" style="left:406px;top:398px;width:70px;height:1px;background:#716f64;"></div>
<div class="t" style="left:408px;top:380px;">Officiator N...</div>
<div class="a" style="left:476px;top:382px;width:70px;height:1px;background:#ffffff;"></div>
<div class="a" style="left:476px;top:382px;width:1px;height:17px;background:#ffffff;"></div>
<div class="a" style="left:544px;top:383px;width:1px;height:15px;background:#aca899;"></div>
<div class="a" style="left:545px;top:382px;width:1px;height:17px;background:#716f64;"></div>
<div class="a" style="left:476px;top:397px;width:70px;height:1px;background:#aca899;"></div>
<div class="a" style="left:476px;top:398px;width:70px;height:1px;background:#716f64;"></div>
<div class="t" style="left:478px;top:380px;">Witnesses</div>
<div class="a" style="left:546px;top:382px;width:100px;height:1px;background:#ffffff;"></div>
<div class="a" style="left:546px;top:382px;width:1px;height:17px;background:#ffffff;"></div>
<div class="a" style="left:644px;top:383px;width:1px;height:15px;background:#aca899;"></div>
<div class="a" style="left:645px;top:382px;width:1px;height:17px;background:#716f64;"></div>
<div class="a" style="left:546px;top:397px;width:100px;height:1px;background:#aca899;"></div>
<div class="a" style="left:546px;top:398px;width:100px;height:1px;background:#716f64;"></div>
<div class="t" style="left:548px;top:380px;">Source</div>
<div class="a" style="left:646px;top:382px;width:70px;height:1px;background:#ffffff;"></div>
<div class="a" style="left:646px;top:382px;width:1px;height:17px;background:#ffffff;"></div>
<div class="a" style="left:714px;top:383px;width:1px;height:15px;background:#aca899;"></div>
<div class="a" style="left:715px;top:382px;width:1px;height:17px;background:#716f64;"></div>
<div class="a" style="left:646px;top:397px;width:70px;height:1px;background:#aca899;"></div>
<div class="a" style="left:646px;top:398px;width:70px;height:1px;background:#716f64;"></div>
<div class="t" style="left:648px;top:380px;">Requested ...</div>
<div class="a" style="left:716px;top:382px;width:44px;height:1px;background:#ffffff;"></div>
<div class="a" style="left:716px;top:382px;width:1px;height:17px;background:#ffffff;"></div>
<div class="a" style="left:716px;top:397px;width:44px;height:1px;background:#aca899;"></div>
<div class="a" style="left:716px;top:398px;width:44px;height:1px;background:#716f64;"></div>
<div class="t" style="left:718px;top:380px;">Husba ...</div>
<div class="a" style="left:21px;top:433px;width:739px;height:1px;background:#d8d8d8;"></div>
<div class="a" style="left:21px;top:450px;width:739px;height:1px;background:#d8d8d8;"></div>
<div class="a" style="left:21px;top:467px;width:739px;height:1px;background:#d8d8d8;"></div>
<div class="a" style="left:95px;top:399px;width:1px;height:82px;background:#cccccc;"></div>
<div class="a" style="left:165px;top:399px;width:1px;height:82px;background:#cccccc;"></div>
<div class="a" style="left:235px;top:399px;width:1px;height:82px;background:#cccccc;"></div>
<div class="a" style="left:335px;top:399px;width:1px;height:82px;background:#cccccc;"></div>
<div class="a" style="left:405px;top:399px;width:1px;height:82px;background:#cccccc;"></div>
<div class="a" style="left:475px;top:399px;width:1px;height:82px;background:#cccccc;"></div>
<div class="a" style="left:545px;top:399px;width:1px;height:82px;background:#cccccc;"></div>
<div class="a" style="left:645px;top:399px;width:1px;height:82px;background:#cccccc;"></div>
<div class="a" style="left:715px;top:399px;width:1px;height:82px;background:#cccccc;"></div>
<div class="a" style="left:21px;top:399px;width:739px;height:1px;background:#316ac5;"></div>
<div class="a" style="left:21px;top:414px;width:739px;height:1px;background:#316ac5;"></div>
<div class="a" style="left:21px;top:399px;width:1px;height:16px;background:#316ac5;"></div>
<div class="t" style="left:23px;top:397px;letter-spacing:-0.22px">Marriage - Civil</div>
<div class="t" style="left:98px;top:397px;">27 Aug 1949</div>
<div class="t" style="left:238px;top:397px;">Paris XX</div>
<div class="a" style="left:759px;top:480px;width:3px;height:20px;background:#ece9d8;"></div>
<div class="a" style="left:21px;top:480px;width:738px;height:1px;background:#fff;"></div>
<div class="a" style="left:21px;top:481px;width:737px;height:1px;background:#f0efe8;"></div>
<div class="a" style="left:21px;top:482px;width:737px;height:16px;background:linear-gradient(180deg,#fbfaf6,#fefefb 40%,#fdfdfa 80%,#f3f2ec)"></div>
<div class="a" style="left:758px;top:481px;width:1px;height:19px;background:#fff;"></div>
<div class="a" style="left:757px;top:481px;width:1px;height:18px;background:#f1efe2;"></div>
<div class="a" style="left:19px;top:499px;width:740px;height:1px;background:#fff;"></div>
<div class="a" style="left:21px;top:498px;width:737px;height:1px;background:#f1efe2;"></div>
<div class="a" style="left:21px;top:482px;width:16px;height:15px;border:1px solid #fff;border-radius:2px;background:linear-gradient(135deg,#dae5fd,#c8d7fc 50%,#b4cafa)"></div>
<div class="a" style="left:22px;top:497px;width:16px;height:1px;background:#9ab4ea;"></div>
<div class="a" style="left:37px;top:483px;width:1px;height:15px;background:#b9cbf2;"></div>
<div class="a" style="left:740px;top:482px;width:16px;height:15px;border:1px solid #fff;border-radius:2px;background:linear-gradient(135deg,#dae5fd,#c8d7fc 50%,#b4cafa)"></div>
<div class="a" style="left:741px;top:497px;width:16px;height:1px;background:#9ab4ea;"></div>
<div class="a" style="left:756px;top:483px;width:1px;height:15px;background:#b9cbf2;"></div>
<svg class="a" style="left:21px;top:482px" width="16" height="16"><path d="M9.5 4 L5.5 8 L9.5 12" stroke="#4d6185" stroke-width="2" fill="none" stroke-linecap="square"/></svg>
<svg class="a" style="left:740px;top:482px" width="16" height="16"><path d="M6.5 4 L10.5 8 L6.5 12" stroke="#4d6185" stroke-width="2" fill="none" stroke-linecap="square"/></svg>
<div class="a" style="left:38px;top:482px;width:383px;height:15px;border:1px solid #fff;border-radius:2px;background:linear-gradient(180deg,#cad8fc,#c4d4fb 60%,#b3cbfa)"></div>
<div class="a" style="left:39px;top:497px;width:383px;height:1px;background:#9ab4ea;"></div>
<div class="a" style="left:421px;top:483px;width:1px;height:15px;background:#9ab4ea;"></div>
<div class="a" style="left:226px;top:486px;width:1px;height:7px;background:#eef3fe;"></div>
<div class="a" style="left:227px;top:487px;width:1px;height:7px;background:#8cb0f8;"></div>
<div class="a" style="left:228px;top:486px;width:1px;height:7px;background:#eef3fe;"></div>
<div class="a" style="left:229px;top:487px;width:1px;height:7px;background:#8cb0f8;"></div>
<div class="a" style="left:230px;top:486px;width:1px;height:7px;background:#eef3fe;"></div>
<div class="a" style="left:231px;top:487px;width:1px;height:7px;background:#8cb0f8;"></div>
<div class="a" style="left:232px;top:486px;width:1px;height:7px;background:#eef3fe;"></div>
<div class="a" style="left:233px;top:487px;width:1px;height:7px;background:#8cb0f8;"></div>
<div class="a" style="left:532px;top:517px;width:75px;height:23px;background:#000;"></div>
<div class="a" style="left:533px;top:518px;width:73px;height:21px;background:#ece9d8;"></div>
<div class="a" style="left:533px;top:518px;width:73px;height:1px;background:#ffffff;"></div>
<div class="a" style="left:533px;top:518px;width:1px;height:21px;background:#ffffff;"></div>
<div class="a" style="left:533px;top:538px;width:73px;height:1px;background:#716f64;"></div>
<div class="a" style="left:605px;top:518px;width:1px;height:21px;background:#716f64;"></div>
<div class="a" style="left:534px;top:519px;width:71px;height:1px;background:#f1efe2;"></div>
<div class="a" style="left:534px;top:519px;width:1px;height:19px;background:#f1efe2;"></div>
<div class="a" style="left:534px;top:537px;width:71px;height:1px;background:#aca899;"></div>
<div class="a" style="left:604px;top:519px;width:1px;height:19px;background:#aca899;"></div>
<div class="t" style="left:562px;top:518px;">OK</div>
<div class="a" style="left:613px;top:517px;width:75px;height:23px;background:#ece9d8;"></div>
<div class="a" style="left:613px;top:517px;width:75px;height:1px;background:#ffffff;"></div>
<div class="a" style="left:613px;top:517px;width:1px;height:23px;background:#ffffff;"></div>
<div class="a" style="left:613px;top:539px;width:75px;height:1px;background:#716f64;"></div>
<div class="a" style="left:687px;top:517px;width:1px;height:23px;background:#716f64;"></div>
<div class="a" style="left:614px;top:518px;width:73px;height:1px;background:#f1efe2;"></div>
<div class="a" style="left:614px;top:518px;width:1px;height:21px;background:#f1efe2;"></div>
<div class="a" style="left:614px;top:538px;width:73px;height:1px;background:#aca899;"></div>
<div class="a" style="left:686px;top:518px;width:1px;height:21px;background:#aca899;"></div>
<div class="t" style="left:632px;top:518px;">Cancel</div>
<div class="a" style="left:694px;top:517px;width:75px;height:23px;background:#ece9d8;"></div>
<div class="a" style="left:694px;top:517px;width:75px;height:1px;background:#ffffff;"></div>
<div class="a" style="left:694px;top:517px;width:1px;height:23px;background:#ffffff;"></div>
<div class="a" style="left:694px;top:539px;width:75px;height:1px;background:#716f64;"></div>
<div class="a" style="left:768px;top:517px;width:1px;height:23px;background:#716f64;"></div>
<div class="a" style="left:695px;top:518px;width:73px;height:1px;background:#f1efe2;"></div>
<div class="a" style="left:695px;top:518px;width:1px;height:21px;background:#f1efe2;"></div>
<div class="a" style="left:695px;top:538px;width:73px;height:1px;background:#aca899;"></div>
<div class="a" style="left:767px;top:518px;width:1px;height:21px;background:#aca899;"></div>
<div class="t" style="left:720px;top:518px;">Help</div>
<div class="a" style="left:17px;top:550px;width:5px;height:1px;background:#000;"></div>
<div class="a" style="left:139px;top:550px;width:3px;height:1px;background:#000;"></div>
<div class="a" style="left:217px;top:550px;width:5px;height:1px;background:#000;"></div>
<div class="a" style="left:299px;top:550px;width:3px;height:1px;background:#000;"></div>
<div class="a" style="left:377px;top:550px;width:5px;height:1px;background:#000;"></div>
<div class="a" style="left:227px;top:550px;width:5px;height:1px;background:#f00000;"></div>
<div class="a" style="left:306px;top:550px;width:5px;height:1px;background:#f00000;"></div>
<div class="a" style="left:387px;top:550px;width:5px;height:1px;background:#f00000;"></div>
<div class="a" style="left:429px;top:550px;width:4px;height:1px;background:#6070c0;"></div>
<div class="a" style="left:543px;top:550px;width:1px;height:1px;background:#e070c0;"></div>
<div class="a" style="left:544px;top:550px;width:1px;height:1px;background:#0000a0;"></div>
<div class="a" style="left:599px;top:550px;width:1px;height:1px;background:#0000a0;"></div>
<div class="a" style="left:605px;top:550px;width:3px;height:1px;background:#0000a0;"></div>
<div class="a" style="left:611px;top:550px;width:3px;height:1px;background:#0000a0;"></div>
<div class="a" style="left:620px;top:550px;width:3px;height:1px;background:#0000a0;"></div>
<div class="a" style="left:626px;top:550px;width:3px;height:1px;background:#0000a0;"></div>
<div class="a" style="left:719px;top:550px;width:1px;height:1px;background:#e070e0;"></div>
</body></html>
